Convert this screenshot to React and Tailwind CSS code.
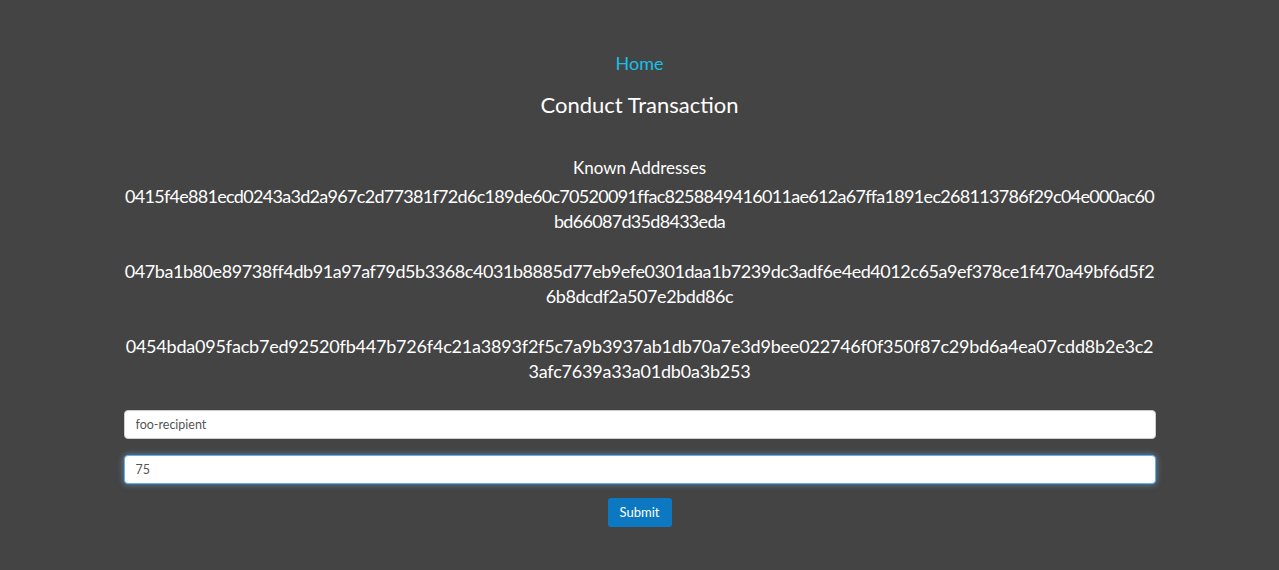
import { useState } from 'react';

const addresses = [
  {
    lines: [
      '0415f4e881ecd0243a3d2a967c2d77381f72d6c189de60c70520091ffac8258849416011ae612a67ffa1891ec268113786f29c04e000ac60',
      'bd66087d35d8433eda',
    ],
    track: 'tracking-[-0.7px]',
  },
  {
    lines: [
      '047ba1b80e89738ff4db91a97af79d5b3368c4031b8885d77eb9efe0301daa1b7239dc3adf6e4ed4012c65a9ef378ce1f470a49bf6d5f2',
      '6b8dcdf2a507e2bdd86c',
    ],
    track: 'tracking-[-0.44px]',
  },
  {
    lines: [
      '0454bda095facb7ed92520fb447b726f4c21a3893f2f5c7a9b3937ab1db70a7e3d9bee022746f0f350f87c29bd6a4ea07cdd8b2e3c2',
      '3afc7639a33a01db0a3b253',
    ],
    track: 'tracking-[-0.2px]',
  },
];

export default function App() {
  const [recipient, setRecipient] = useState('foo-recipient');
  const [amount, setAmount] = useState('75');

  return (
    <div className="min-h-[570px] bg-[#444444] text-white font-['Lato',sans-serif] pt-[51px]">
      {/* Nav */}
      <div className="text-center">
        <a href="#" className="text-[18px] leading-[24px] text-[#16c0e8]">
          Home
        </a>
      </div>

      <h3 className="text-center text-[22px] leading-[28px] mt-[15px]">Conduct Transaction</h3>

      <div className="w-[1032px] mx-auto text-center mt-[38px]">
        <h4 className="text-[17px] leading-[22px]">Known Addresses</h4>

        <div className="mt-[5px]">
          {addresses.map((addr, i) => (
            <div key={i} className={`text-[18px] leading-[25px] mb-[25px] last:mb-0 ${addr.track}`}>
              {addr.lines.map((line, j) => (
                <div key={j} className="whitespace-nowrap">
                  {line}
                </div>
              ))}
            </div>
          ))}
        </div>

        <div className="mt-[26px] flex flex-col gap-[16px]">
          <input
            value={recipient}
            onChange={(e) => setRecipient(e.target.value)}
            className="w-full h-[29px] rounded-[4px] bg-white border border-[#cccccc] px-[11px] text-[12.5px] text-[#555555] outline-none"
          />
          <input
            value={amount}
            onChange={(e) => setAmount(e.target.value)}
            className="w-full h-[29px] rounded-[4px] bg-white border border-[#66afe9] shadow-[0_0_6px_rgba(102,175,233,0.7)] px-[11px] text-[12.5px] text-[#555555] outline-none"
          />
        </div>

        <div className="mt-[14px] flex justify-center">
          <button className="h-[29px] w-[64px] rounded-[3px] bg-[#0c78c2] text-white text-[13px]">
            Submit
          </button>
        </div>
      </div>
    </div>
  );
}
